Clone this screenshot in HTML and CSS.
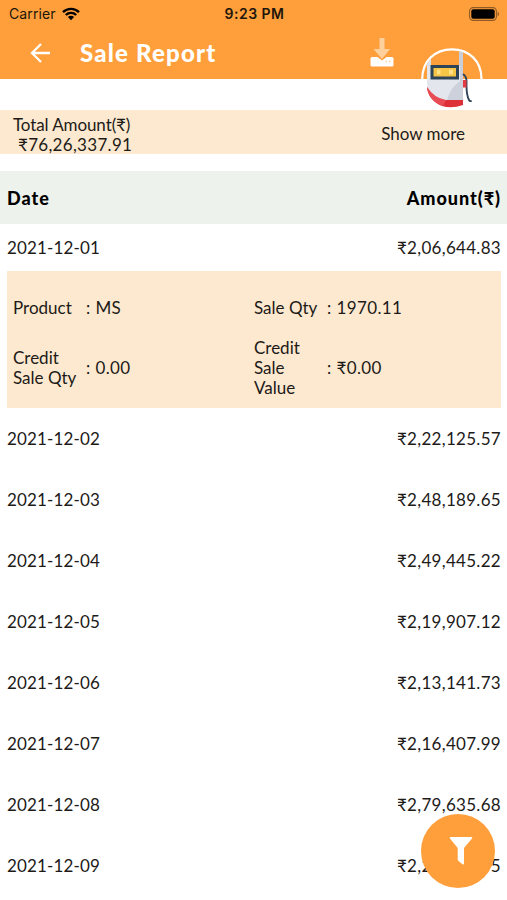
FILE: index.html
```
<!DOCTYPE html>
<html lang="en">
<head>
    <meta charset="utf-8">
    <title>Sale Report</title>
    <link rel="stylesheet" href="styles.css">
</head>
<body>
    <header class="top">
        <div class="status">
            <div class="carrier">
                <span>Carrier</span>
                <svg width="18" height="14" viewBox="0 0 18 14">
                    <path d="M1 5.2a11.4 11.4 0 0 1 16 0M3.8 8a7.4 7.4 0 0 1 10.4 0" fill="none" stroke="#000" stroke-width="2.4"/>
                    <path d="M5.9 10.1a4.4 4.4 0 0 1 6.2 0L9 13.3z"/>
                </svg>
            </div>
            <div class="time">9:23 PM</div>
            <svg class="battery" width="31" height="14" viewBox="0 0 31 14">
                <rect x=".6" y=".6" width="26.8" height="12.8" rx="3.6" fill="none" stroke="#8f5a25" stroke-width="1.1"/>
                <rect x="2.3" y="2.3" width="23.4" height="9.4" rx="2" fill="#000"/>
                <path d="M28.6 4.6q3 2.4 0 4.8z" fill="#8f5a25"/>
            </svg>
        </div>
        <div class="bar">
            <svg class="back" width="20" height="20" viewBox="0 0 20 20">
                <path d="M20 10H2M11 1L2 10l9 9" fill="none" stroke="#fff" stroke-width="2.3"/>
            </svg>
            <h1>Sale Report</h1>
            <svg class="download" width="24" height="30" viewBox="0 0 24 30">
                <path d="M9.5 0h5v11h5.500L12 21 3.500 11h6z" fill="#ffcf9c"/>
                <path d="M2 19h5.500l4.500 3.600 4.500-3.600H22q1.500 0 1.500 1.500V27q0 1.500-1.500 1.500H2Q.5 28.500.5 27v-6.500Q.5 19 2 19z" fill="#fff"/>
                <path d="M15.500 23.600h1.500M19 23.600h1.500" stroke="#ffcf9c" stroke-width="1.500"/>
            </svg>
        </div>
        <svg class="pump" width="64" height="62" viewBox="0 0 64 62">
            <path d="M2.200 32C2.200 14 15 2.300 32 2.300S61.500 14 61.500 32" fill="none" stroke="#fff" stroke-width="2.200"/>
            <path d="M7 17q1.500-3 4-5v7H7z" fill="#dce1e9"/>
            <path d="M39 4l4 1.500V54h-4z" fill="#c9ced9"/>
            <path d="M7 19h33v36q-6 4-16 1Q8 51 7 37z" fill="#e3e6ed"/>
            <path d="M27 53q3-12 13-19h3v20q-8 3-16-1z" fill="#ccd1dc"/>
            <path d="M7 40q7 12 17 13h19v5q-11 4-21 1Q8 53 7 40z" fill="#dd3038"/>
            <path d="M7 40q7 11 19 13l-3 6Q8 53 7 40z" fill="#e84c54"/>
            <rect x="10.500" y="18" width="28.500" height="14.500" fill="#2d4358"/>
            <rect x="13.500" y="21" width="22.500" height="8.500" fill="#f6c447"/>
            <path d="M17 22.800h3.500v4.500H17zM29 22.800h4v4.500h-4z" fill="#ffe184"/>
            <path d="M43 27q3 2 3.500 6v6q0 9 2.500 14 1 2 2.500.500" fill="none" stroke="#33475b" stroke-width="1.900"/>
            <path d="M43 33h3.500v7.500H43z" fill="#e23b43"/>
        </svg>
    </header>

    <section class="total">
        <div class="total-text">
            <div class="total-label">Total Amount(₹)</div>
            <div class="total-value">₹76,26,337.91</div>
        </div>
        <div class="more">Show more</div>
    </section>

    <main>
        <div class="head">
            <span>Date</span>
            <span class="head-amount">Amount(₹)</span>
        </div>
        <div class="row open"><span class="date">2021-12-01</span><span class="amount">₹2,06,644.83</span></div>
        <div class="details">
            <div class="item"><span class="label">Product</span><span class="value">: MS</span></div>
            <div class="item"><span class="label">Sale Qty</span><span class="value">: 1970.11</span></div>
            <div class="item"><span class="label">Credit Sale Qty</span><span class="value">: 0.00</span></div>
            <div class="item"><span class="label">Credit Sale Value</span><span class="value">: ₹0.00</span></div>
        </div>
        <div class="row"><span class="date">2021-12-02</span><span class="amount">₹2,22,125.57</span></div>
        <div class="row"><span class="date">2021-12-03</span><span class="amount">₹2,48,189.65</span></div>
        <div class="row"><span class="date">2021-12-04</span><span class="amount">₹2,49,445.22</span></div>
        <div class="row"><span class="date">2021-12-05</span><span class="amount">₹2,19,907.12</span></div>
        <div class="row"><span class="date">2021-12-06</span><span class="amount">₹2,13,141.73</span></div>
        <div class="row"><span class="date">2021-12-07</span><span class="amount">₹2,16,407.99</span></div>
        <div class="row"><span class="date">2021-12-08</span><span class="amount">₹2,79,635.68</span></div>
        <div class="row"><span class="date">2021-12-09</span><span class="amount">₹2,23,518.75</span></div>
    </main>

    <div class="filter">
        <svg width="24" height="30" viewBox="0 0 24 30">
            <path d="M1.500 1h21q1.500 0 .5 1.500L15 12v15.500q0 1.500-1.500.700L9.500 25q-.8-.6-.8-1.500V12L1 2.500Q0 1 1.500 1z" fill="#fff"/>
        </svg>
    </div>
</body>
</html>
```
FILE: styles.css
```
* {
    box-sizing: border-box;
}
body {
    margin: 0;
    height: 900px;
    overflow: hidden;
    position: relative;
    background: #fff;
    color: #1d1a18;
    font-family: Lato, "Liberation Sans", sans-serif;
    font-size: 17px;
    line-height: 20px;
}
.top {
    position: relative;
    height: 79px;
    background: #ff9f3c;
}
.status {
    display: grid;
    grid-template-columns: 1fr auto 1fr;
    align-items: center;
    height: 27px;
    padding: 0 7px 0 9px;
    color: #21160b;
    font-family: Inter, sans-serif;
    font-size: 14px;
}
.carrier {
    display: flex;
    align-items: center;
    gap: 6px;
    letter-spacing: 0.1px;
}
.time {
    font-weight: 600;
    letter-spacing: 0.5px;
}
.battery {
    justify-self: end;
}
.bar {
    display: flex;
    align-items: center;
    height: 52px;
    padding-left: 30px;
}
h1 {
    width: 290px;
    margin: 0 0 0 30px;
    color: #fff;
    font-size: 24px;
    font-weight: 900;
    line-height: 30px;
    letter-spacing: 1.2px;
}
.pump {
    position: absolute;
    left: 420px;
    top: 47px;
}
.total {
    display: flex;
    align-items: center;
    justify-content: space-between;
    height: 44px;
    margin: 31px 0 17px;
    padding: 6px 42px 0 13px;
    background: #fce9cf;
}
.total-label {
    letter-spacing: -0.1px;
}
.total-value {
    padding-left: 5px;
    letter-spacing: 0.3px;
}
.more {
    padding-bottom: 2px;
}
.head {
    display: flex;
    align-items: center;
    justify-content: space-between;
    height: 53px;
    padding: 1px 6px 0 7px;
    background: #edf2ed;
    color: #000;
    font-size: 18px;
    font-weight: 900;
    letter-spacing: 0.95px;
}
.row {
    display: flex;
    align-items: center;
    justify-content: space-between;
    height: 61.1px;
    padding: 0 6px 0 7px;
}
.row.open {
    height: 47px;
}
.date {
    letter-spacing: 0.15px;
}
.amount {
    letter-spacing: 0.3px;
}
.details {
    display: grid;
    grid-template-columns: 241px 1fr;
    grid-template-rows: 33px 60px;
    align-content: start;
    row-gap: 14px;
    height: 137px;
    margin: 0 6px 0 7px;
    padding: 20px 6px 0;
    background: #fce9cf;
}
.item {
    display: flex;
    align-items: center;
}
.label {
    width: 66px;
    margin-right: 7px;
}
.value {
    letter-spacing: 0.4px;
}
.filter {
    position: absolute;
    left: 421px;
    top: 814px;
    display: flex;
    align-items: center;
    justify-content: center;
    width: 74px;
    height: 74px;
    padding-left: 5px;
    border-radius: 50%;
    background: #ff9f3c;
}
```
